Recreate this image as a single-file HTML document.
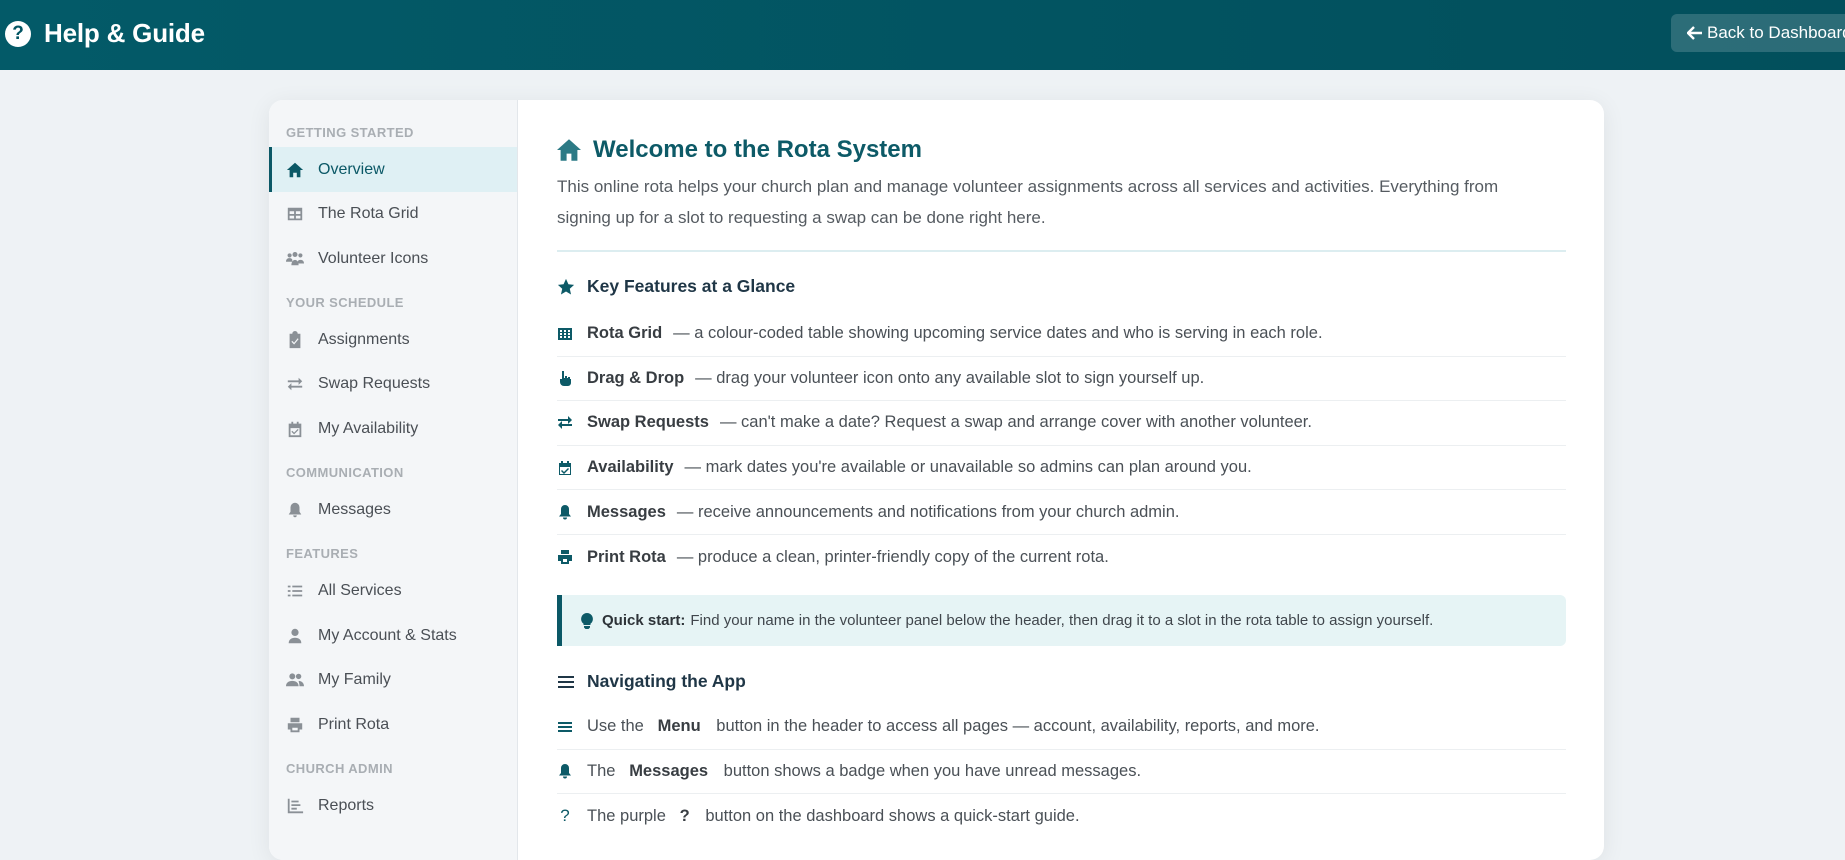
<!DOCTYPE html>
<html><head><meta charset="utf-8">
<style>
*{box-sizing:border-box;margin:0;padding:0}
body{width:1845px;height:837px;overflow:hidden;background:#eef2f5;font-family:"Liberation Sans",sans-serif;position:relative}
.hdr{position:absolute;left:0;top:0;width:1845px;height:70px;background:linear-gradient(90deg,#035a68,#024f5c);}
.hdr .q{position:absolute;left:5px;top:21px;width:26px;height:26px;border-radius:50%;background:#fff;color:#035563;font-weight:bold;font-size:19px;text-align:center;line-height:26px}
.hdr h1{position:absolute;left:44px;top:18px;color:#fff;font-size:26px;font-weight:bold;letter-spacing:-0.2px}
.back{position:absolute;left:1671px;top:14px;width:190px;height:38px;border-radius:6px;background:rgba(255,255,255,0.17);color:#fff;font-size:17px;line-height:38px;padding-left:16px;white-space:nowrap;display:flex;align-items:center}
.back svg{width:15px;height:14px;margin-right:5px}
.card{position:absolute;left:269px;top:100px;width:1335px;height:760px;background:#fff;border-radius:14px;box-shadow:0 4px 24px rgba(0,0,0,0.07);overflow:hidden}
.side{position:absolute;left:0;top:0;width:249px;height:100%;background:#f4f6f8;border-right:1px solid #e3e7eb;padding-top:11px}
.lab{height:36.4px;padding:14px 0 0 17px;font-size:13px;font-weight:bold;color:#a9aeb3;letter-spacing:0.4px;line-height:15px}
.it{height:44.6px;display:flex;align-items:center;font-size:16px;color:#4a4f55;padding-left:17px}
.it svg{width:18px;height:18px;margin-right:14px;fill:#8a9096}
.it.act{background:#dff0f4;border-left:3px solid #0b5866;padding-left:14px;color:#0b5866}
.it.act svg{fill:#0b5866}
.main{position:absolute;left:288px;top:0;width:1009px}
.t{position:absolute;top:36px;left:0;font-size:24px;font-weight:bold;color:#0d5a67;display:flex;align-items:center}
.t svg{width:24px;height:22px;fill:#2c7a85;margin-right:12px}
.p{position:absolute;top:71px;left:0;font-size:17px;line-height:31px;color:#555b61;width:1010px}
.div{position:absolute;top:150px;left:0;width:1009px;height:2px;background:#dcedf0}
.h2{position:absolute;left:0;font-size:17.5px;font-weight:bold;color:#1f3646;display:flex;align-items:center}
.h2 svg{width:18px;height:18px;fill:#0d5a67;margin-right:12px}
.rows{position:absolute;left:0;width:1009px}
.r{height:44.6px;display:flex;align-items:center;font-size:16.5px;color:#4a5056;border-bottom:1px solid #eceff1;white-space:nowrap}
.r:last-child{border-bottom:none}
.r svg{width:16px;height:16px;fill:#0d5a67;margin:0 14px 0 0;flex:none}
.r b{color:#383d42;margin-right:11px}
.qs{position:absolute;left:0;top:495px;width:1009px;height:51px;background:#e6f4f5;border-left:5px solid #0b5866;border-radius:0 6px 6px 0;display:flex;align-items:center;padding-left:18px;font-size:15px;color:#40464c;white-space:nowrap}
.qs svg{width:14px;height:16px;fill:#0d5a67;margin-right:8px}
.qs b{color:#2d3338;margin-right:5px}
</style></head><body>
<div class="hdr"><div class="q">?</div><h1>Help &amp; Guide</h1><div class="back"><svg viewBox="0 0 15 14"><path d="M7 1 1 7l6 6M1 7h14" stroke="#fff" stroke-width="2.4" fill="none"/></svg>Back to Dashboard</div></div>
<div class="card">
<div class="side">
<div class="lab">GETTING STARTED</div>
<div class="it act"><svg viewBox="0 0 20 20"><path d="M10 2 1 10h3v8h4v-5h4v5h4v-8h3z"/></svg>Overview</div>
<div class="it"><svg viewBox="0 0 20 20"><path d="M2 3h16v14H2zM4 7v3h5V7zm7 0v3h5V7zM4 12v3h5v-3zm7 0v3h5v-3z"/></svg>The Rota Grid</div>
<div class="it"><svg viewBox="0 0 20 20"><circle cx="4" cy="6" r="2.3"/><circle cx="10" cy="5" r="2.8"/><circle cx="16" cy="6" r="2.3"/><path d="M0 13c0-3 2-4 4-4s3 1 3 2v2zm6 4c0-4 2-6 4-6s4 2 4 6zm7-4c0-1 1-2 3-2s4 1 4 4h-7z"/></svg>Volunteer Icons</div>
<div class="lab">YOUR SCHEDULE</div>
<div class="it"><svg viewBox="0 0 20 20"><path d="M4 3h3a3 3 0 0 1 6 0h3v16H4zm2 9 3 3 5-6-1-1-4 5-2-2z"/></svg>Assignments</div>
<div class="it"><svg viewBox="0 0 20 20"><path d="M2 6h12V3l4 4-4 4V8H2zm16 8H6v3l-4-4 4-4v3h12z"/></svg>Swap Requests</div>
<div class="it"><svg viewBox="0 0 20 20"><path d="M3 4h3V2h2v2h4V2h2v2h3v15H3zm2 5v8h10V9zm2 3 2 2 4-4 1 1-5 5-3-3z"/></svg>My Availability</div>
<div class="lab">COMMUNICATION</div>
<div class="it"><svg viewBox="0 0 20 20"><path d="M10 2a5 5 0 0 1 5 5v5l2 3H3l2-3V7a5 5 0 0 1 5-5zm-2 14h4a2 2 0 0 1-4 0z"/></svg>Messages</div>
<div class="lab">FEATURES</div>
<div class="it"><svg viewBox="0 0 20 20"><path d="M2 4h3v2H2zm5 0h11v2H7zM2 9h3v2H2zm5 0h11v2H7zM2 14h3v2H2zm5 0h11v2H7z"/></svg>All Services</div>
<div class="it"><svg viewBox="0 0 20 20"><circle cx="10" cy="6" r="4"/><path d="M3 18c0-4 3-6 7-6s7 2 7 6z"/></svg>My Account &amp; Stats</div>
<div class="it"><svg viewBox="0 0 20 20"><circle cx="7" cy="6" r="3.3"/><circle cx="14" cy="6" r="3"/><path d="M0 17c0-4 3-6 7-6s7 2 7 6zm14-6c3 0 6 2 6 6h-5c0-3-1-5-1-6z"/></svg>My Family</div>
<div class="it"><svg viewBox="0 0 20 20"><path d="M5 2h10v5H5zM2 8h16v7h-3v3H5v-3H2zm5 5v3h6v-3z"/></svg>Print Rota</div>
<div class="lab">CHURCH ADMIN</div>
<div class="it"><svg viewBox="0 0 20 20"><path d="M2 2h2v14h15v2H2zm4 2h8v2H6zm0 4h10v2H6zm0 4h6v2H6z"/></svg>Reports</div>
</div>
<div class="main">
<div class="t"><svg viewBox="0 0 20 18"><path d="M10 0 0 9h3v9h5v-6h4v6h5V9h3z"/></svg>Welcome to the Rota System</div>
<div class="p">This online rota helps your church plan and manage volunteer assignments across all services and activities. Everything from<br>signing up for a slot to requesting a swap can be done right here.</div>
<div class="div"></div>
<div class="h2" style="top:176px"><svg viewBox="0 0 20 20"><path d="M10 1l2.7 6 6.3.6-4.8 4.3 1.4 6.4L10 15l-5.6 3.3 1.4-6.4L1 7.6 7.3 7z"/></svg>Key Features at a Glance</div>
<div class="rows" style="top:212px">
<div class="r"><svg viewBox="0 0 16 16"><path d="M1 2h14v12H1zm2 2v2h2V4zm4 0v2h2V4zm4 0v2h2V4zM3 7v2h2V7zm4 0v2h2V7zm4 0v2h2V7zM3 10v2h2v-2zm4 0v2h2v-2zm4 0v2h2v-2z"/></svg><b>Rota Grid</b>— a colour-coded table showing upcoming service dates and who is serving in each role.</div>
<div class="r"><svg viewBox="0 0 16 16"><path d="M5 1h2v7h1V6h2v2h1V7h2v2h1v4a3 3 0 0 1-3 3H7a4 4 0 0 1-4-4V9h2z"/></svg><b>Drag &amp; Drop</b>— drag your volunteer icon onto any available slot to sign yourself up.</div>
<div class="r"><svg viewBox="0 0 16 16"><path d="M1 4h10V1l4 4-4 4V6H1zm14 7H5v3l-4-4 4-4v3h10z"/></svg><b>Swap Requests</b>— can't make a date? Request a swap and arrange cover with another volunteer.</div>
<div class="r"><svg viewBox="0 0 16 16"><path d="M2 3h2V1h2v2h4V1h2v2h2v12H2zm1 4v7h10V7zm2 3 2 2 4-4 1 1-5 5-3-3z"/></svg><b>Availability</b>— mark dates you're available or unavailable so admins can plan around you.</div>
<div class="r"><svg viewBox="0 0 16 16"><path d="M8 1a4 4 0 0 1 4 4v5l2 2.5H2L4 10V5a4 4 0 0 1 4-4zm-2 12.5h4a2 2 0 0 1-4 0z"/></svg><b>Messages</b>— receive announcements and notifications from your church admin.</div>
<div class="r"><svg viewBox="0 0 16 16"><path d="M4 1h8v4H4zM1 6h14v6h-3v3H4v-3H1zm5 4v3h4v-3z"/></svg><b>Print Rota</b>— produce a clean, printer-friendly copy of the current rota.</div>
</div>
<div class="qs"><svg viewBox="0 0 14 16"><path d="M7 0a6 6 0 0 1 3.5 10.8V12h-7v-1.2A6 6 0 0 1 7 0zM4 13h6v1.5L8.5 16h-3L4 14.5z"/></svg><b>Quick start:</b>Find your name in the volunteer panel below the header, then drag it to a slot in the rota table to assign yourself.</div>
<div class="h2" style="top:571px"><svg viewBox="0 0 18 18" style="fill:#1f3646"><path d="M1 3h16v2H1zm0 5h16v2H1zm0 5h16v2H1z"/></svg>Navigating the App</div>
<div class="rows" style="top:605px">
<div class="r"><svg viewBox="0 0 16 16"><path d="M1 3h14v2H1zm0 4h14v2H1zm0 4h14v2H1z"/></svg>Use the&nbsp;&nbsp;&nbsp;<b>Menu</b>&nbsp;button in the header to access all pages — account, availability, reports, and more.</div>
<div class="r"><svg viewBox="0 0 16 16"><path d="M8 1a4 4 0 0 1 4 4v5l2 2.5H2L4 10V5a4 4 0 0 1 4-4zm-2 12.5h4a2 2 0 0 1-4 0z"/></svg>The&nbsp;&nbsp;&nbsp;<b>Messages</b>&nbsp;button shows a badge when you have unread messages.</div>
<div class="r"><span style="width:16px;margin-right:14px;color:#0d5a67;font-size:17px;text-align:center">?</span>The purple&nbsp;&nbsp;&nbsp;<b>?</b>&nbsp;button on the dashboard shows a quick-start guide.</div>
</div>
</div>
</div>
</body></html>
